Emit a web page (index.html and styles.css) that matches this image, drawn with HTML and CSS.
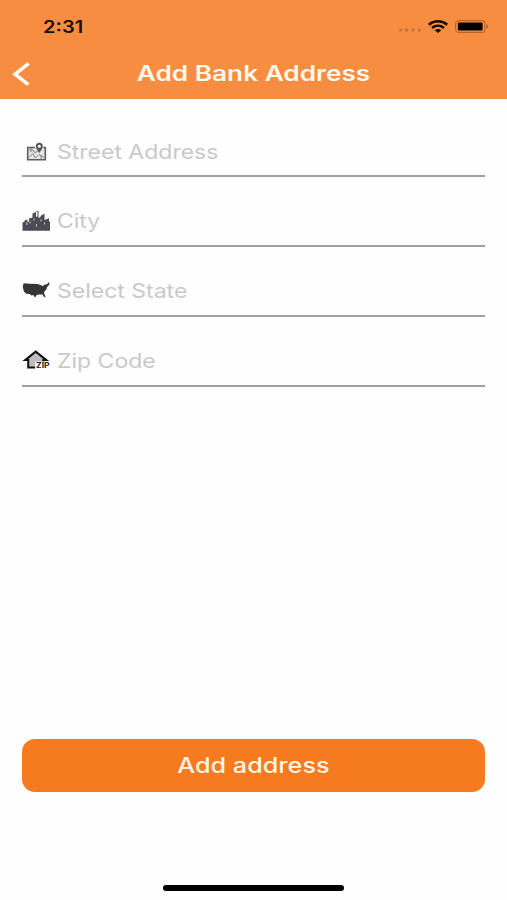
FILE: index.html
```html
<!doctype html>
<html lang="en">

<head>
    <meta charset="UTF-8">
    <meta name="viewport" content="width=device-width, initial-scale=1.0">
    <title>Add Bank Address</title>
    <link rel="stylesheet" href="styles.css">
</head>

<body>
    <header class="header">
        <div class="status-bar">
            <span class="status-time">2:31</span>
            <div class="status-icons">
                <svg class="icon-signal" width="24" height="4" viewBox="0 0 24 4" fill="#c4763c">
                    <circle cx="2.4" cy="2" r="1.7" />
                    <circle cx="8.7" cy="2" r="1.7" />
                    <circle cx="15" cy="2" r="1.7" />
                    <circle cx="21.3" cy="2" r="1.7" />
                </svg>
                <svg class="icon-wifi" width="20" height="13" viewBox="0 0 20 13" fill="none" stroke="#160c04" stroke-width="2.5">
                    <path d="M.8 4.7C6 .2 14 .2 19.2 4.7" />
                    <path d="M4 8c3.6-2.9 8.4-2.9 12 0" />
                    <path d="M6.7 10.2c2-1.5 4.6-1.5 6.6 0L10 12.9z" fill="#160c04" stroke="none" />
                </svg>
                <svg class="icon-battery" width="34" height="13" viewBox="0 0 34 13">
                    <rect x=".6" y=".6" width="29.3" height="11.8" rx="3.2" fill="none" stroke="#b96426" stroke-width="1.1" />
                    <rect x="2.9" y="2.5" width="24.7" height="8" rx="1.3" fill="#000" />
                    <path d="M31.3 4.2c2.4.7 2.4 3.9 0 4.6z" fill="#b96426" />
                </svg>
            </div>
        </div>
        <div class="nav-bar">
            <button class="back" aria-label="Back">
                <svg width="20" height="26" viewBox="0 0 20 26" fill="none" stroke="#fffaf3" stroke-width="3.6">
                    <path d="M16.8 2.4 3 13.3 16.4 23.6" />
                </svg>
            </button>
            <h1 class="title">Add Bank Address</h1>
        </div>
    </header>

    <main class="form">
        <div class="field">
            <svg class="field-icon" width="28" height="26" viewBox="0 0 28 26">
                <path d="M13 9.5H5.7v12.2h17.6V9.5h-2" fill="#e4e4e4" stroke="#5c5c5c" stroke-width="1.6" />
                <path d="M7 19.5l3.8-4 2.7 4.5 3.5-3.5 5 3M7 12h4l1.5 2.5 3.5-1M9 10v4M19 17v4" fill="none" stroke="#858585" stroke-width="1" />
                <path d="M17.3 15c-1.5-2.5-3.5-4.4-3.5-6.7a3.5 3.5 0 0 1 7 0c0 2.3-2 4.2-3.5 6.7z" fill="#555" />
                <circle cx="17.3" cy="8.2" r="1.5" fill="#fff" />
            </svg>
            <span class="placeholder">Street Address</span>
        </div>
        <div class="field">
            <svg class="field-icon" width="28" height="26" viewBox="0 0 28 26">
                <path d="M.5 23.8V15.5l2-.7v-1.2l3-1V15l1.500-.5V11.500l3.500-1V6.500l3.500-1.500v5l1.500-.8V5l-2-.2 3-1v7.500l2.500-2V8.500l3.500-1.800V13l2-.8 2.500-1V14.500h1V23.800z" fill="#4b4b55" />
                <path d="M4.800 18v-2.500M8 16.500v-2M12 13.500v-2M14.500 19.500v-2.500M19 14.500v-2M22.500 17.500v-2" stroke="#bbbbc3" stroke-width="1.2" />
            </svg>
            <span class="placeholder">City</span>
        </div>
        <div class="field">
            <svg class="field-icon" width="28" height="26" viewBox="0 0 28 26">
                <path d="M1.7 6.2 8 6.8l7.500.1 3 1.200 2.400.9 2-1.400 2.200-.4 1.500-2 .9.700-.3 1.800-2.100 2.300-.5 2.100-2.500 2.800.2 2.300 1.200 2.100-.6 1.300-1.700-1.700-.5-1.400-3.700.1-2.200.5-2 2.300-1.500-2.300-1.900.3-1.700-1.300-3.600-.4-2.300-2.400L.7 9.500z" fill="#353535" />
            </svg>
            <span class="placeholder">Select State</span>
        </div>
        <div class="field">
            <svg class="field-icon" width="28" height="26" viewBox="0 0 28 26">
                <path d="M6 12v9h15v-9l-7.3-6z" fill="#bdbdbd" />
                <path d="M13 20.5H6.2v-7.400H3.200L13.700 4.600l10.600 8.500h-3V15" fill="none" stroke="#111" stroke-width="2" />
                <rect x="13.2" y="14.5" width="14.8" height="8.2" fill="#fff" />
                <text class="zip-text" x="14" y="21" textLength="13.5" lengthAdjust="spacingAndGlyphs">ZIP</text>
            </svg>
            <span class="placeholder">Zip Code</span>
        </div>
    </main>

    <footer class="footer">
        <button class="submit"><span class="submit-text">Add address</span></button>
        <div class="home-indicator"></div>
    </footer>
</body>

</html>
```
FILE: styles.css
```css
* {
    box-sizing: border-box;
}

body {
    display: flex;
    flex-direction: column;
    height: 900px;
    margin: 0;
    background-color: #fefefe;
    font-family: Inter, "Liberation Sans", sans-serif;
}

button {
    border: 0;
    padding: 0;
    background: none;
    font-family: inherit;
    cursor: pointer;
}

.header {
    height: 98.5px;
    background-color: #f68d40;
}

.status-bar {
    display: flex;
    justify-content: space-between;
    height: 49px;
    padding: 15px 18px 0 43px;
}

.status-time {
    padding-top: 1px;
    font-size: 17px;
    font-weight: 600;
    line-height: 23px;
    color: #1c0d03;
    transform: scaleX(1.18);
    transform-origin: left;
}

.status-icons {
    display: flex;
    align-items: flex-start;
    padding-top: 5px;
}

.icon-signal {
    margin: 8px 6px 0 0;
}

.icon-wifi {
    margin-right: 7px;
}

.nav-bar {
    display: grid;
    grid-template-columns: 60px 1fr 60px;
    align-items: center;
    height: 49px;
}

.back {
    display: flex;
    padding-left: 12px;
}

.title {
    margin: 0;
    padding-bottom: 2px;
    font-size: 21.5px;
    font-weight: 600;
    line-height: 28px;
    color: #fff7ea;
    text-align: center;
    white-space: nowrap;
    transform: scaleX(1.22);
}

.form {
    flex: 1;
    padding: 9.3px 22px 0;
}

.field {
    display: flex;
    align-items: center;
    height: 69.7px;
    padding-top: 18px;
    border-bottom: 2px solid #a0a0a0;
}

.field-icon {
    flex: none;
    margin-right: 7px;
}

.placeholder {
    padding-top: 2px;
    font-size: 20px;
    line-height: 26px;
    color: #c9c9cb;
    white-space: nowrap;
    transform: scaleX(1.15);
    transform-origin: left;
}

.zip-text {
    font-size: 7px;
    font-weight: 700;
    fill: #222;
}

.footer {
    display: flex;
    flex-direction: column;
    align-items: center;
    height: 161.5px;
    padding: 0 22px;
}

.submit {
    width: 100%;
    height: 53px;
    border-radius: 13px;
    background-color: #f67b20;
}

.submit-text {
    display: inline-block;
    padding-top: 1px;
    font-size: 21px;
    font-weight: 500;
    line-height: 28px;
    color: #fff4e4;
    transform: scaleX(1.2);
}

.home-indicator {
    width: 181px;
    height: 6px;
    margin-top: 93px;
    border-radius: 3px;
    background-color: #000;
}
```
